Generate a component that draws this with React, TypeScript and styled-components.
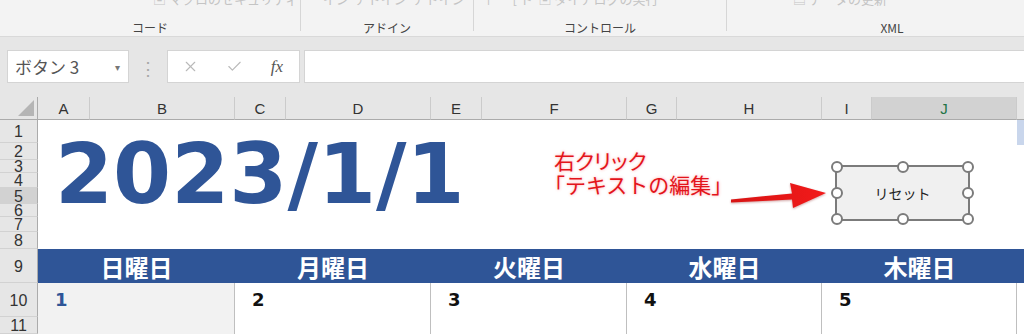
import React from 'react';
import styled, { createGlobalStyle } from 'styled-components';
import { X, Check } from 'lucide-react';

const BLUE = '#2f5597';

const GlobalStyle = createGlobalStyle`
  html, body {
    margin: 0;
    padding: 0;
    background: #e6e6e6;
  }
  body {
    width: 1024px;
    height: 334px;
    overflow: hidden;
    font-family: "Noto Sans CJK JP", "Noto Sans", sans-serif;
  }
`;

const groups = [
  { w: 300, indent: 153, cmd: '▣ マクロのセキュリティ', label: 'コード' },
  { w: 172, indent: 22, cmd: 'イン  アドイン  アドイン', label: 'アドイン' },
  { w: 252, indent: 8, cmd: '↑      [ ト  ▣ ダイアログの実行', label: 'コントロール' },
  { w: 330, indent: 66, cmd: '▤ データの更新', label: 'XML' },
];

const columns = ['A', 'B', 'C', 'D', 'E', 'F', 'G', 'H', 'I', 'J', ''];
const days = ['日曜日', '月曜日', '火曜日', '水曜日', '木曜日', ''];
const handles = [
  [0, 0], [50, 0], [100, 0],
  [0, 50], [100, 50],
  [0, 100], [50, 100], [100, 100],
];

export default function App() {
  return (
    <>
      <GlobalStyle />
      <Ribbon>
        {groups.map((g) => (
          <Group key={g.label} $w={g.w}>
            <Commands $indent={g.indent}>{g.cmd}</Commands>
            <GroupLabel>{g.label}</GroupLabel>
          </Group>
        ))}
      </Ribbon>

      <FormulaBar>
        <NameBox>
          <span>ボタン 3</span>
          <DropArrow>▾</DropArrow>
        </NameBox>
        <Grip>⋮</Grip>
        <FuncBox>
          <X size={17} strokeWidth={1.6} color="#b9b9b9" />
          <Check size={17} strokeWidth={1.6} color="#b9b9b9" />
          <Fx>fx</Fx>
        </FuncBox>
        <FormulaInput />
      </FormulaBar>

      <Sheet>
        <Corner>
          <svg width="16" height="16" viewBox="0 0 16 16">
            <polygon points="16,0 16,16 0,16" fill="#b5b5b5" />
          </svg>
        </Corner>
        {columns.map((c, i) => (
          <ColHeader key={i} $active={c === 'J'}>{c}</ColHeader>
        ))}
        {Array.from({ length: 11 }, (_, i) => (
          <RowHeader key={i} $row={i + 2} $active={i === 4}>{i + 1}</RowHeader>
        ))}

        <TopArea>
          <Title>2023/1/1</Title>
          <Note>
            <NoteLine $tight>右クリック</NoteLine>
            <NoteLine $shift={-10}>「テキストの編集」</NoteLine>
          </Note>
          <Arrow width="100" height="30" viewBox="0 0 100 30">
            <defs>
              <linearGradient id="arrowFill" x1="0" y1="0" x2="1" y2="0">
                <stop offset="0" stopColor="#d81414" />
                <stop offset="1" stopColor="#f21a1a" />
              </linearGradient>
            </defs>
            <polygon
              points="2,18.5 63,12.5 61,2 97,12 64,27 63,18.5 2,21.5"
              fill="url(#arrowFill)"
            />
          </Arrow>
          <FormButton>
            リセット
            {handles.map(([x, y], i) => (
              <Handle key={i} $x={x} $y={y} />
            ))}
          </FormButton>
        </TopArea>
        <EdgeColumn>
          <EdgeMark />
        </EdgeColumn>

        {days.map((d, i) => (
          <DayHead key={i} $col={2 + i * 2}>{d}</DayHead>
        ))}
        {days.map((_, i) => (
          <DateCell key={i} $col={2 + i * 2} $first={i === 0}>
            {i < 5 ? i + 1 : ''}
          </DateCell>
        ))}
      </Sheet>
    </>
  );
}

const Ribbon = styled.div`
  display: flex;
  height: 36px;
  background: #f3f3f3;
  border-bottom: 1px solid #d9d9d9;
  overflow: hidden;
`;

const Group = styled.div<{ $w: number }>`
  flex: 0 0 ${(p) => p.$w}px;
  height: 31px;
  display: flex;
  flex-direction: column;
  justify-content: space-between;
  border-right: 1px solid #d6d6d6;
  &:last-child {
    border-right: none;
  }
`;

const Commands = styled.div<{ $indent: number }>`
  margin-top: -9px;
  padding-left: ${(p) => p.$indent}px;
  font-size: 13px;
  line-height: 16px;
  color: #c4c4c4;
  white-space: pre;
`;

const GroupLabel = styled.div`
  margin-bottom: -4px;
  text-align: center;
  font-size: 12px;
  line-height: 14px;
  color: #444;
`;

const FormulaBar = styled.div`
  display: flex;
  align-items: flex-start;
  height: 60px;
  box-sizing: border-box;
  padding: 13px 0 0 7px;
  background: #e6e6e6;
`;

const NameBox = styled.div`
  width: 122px;
  height: 33px;
  box-sizing: border-box;
  display: flex;
  align-items: center;
  justify-content: space-between;
  padding: 0 8px 0 7px;
  background: #fff;
  border: 1px solid #d4d4d4;
  font-size: 17px;
  color: #555;
`;

const DropArrow = styled.span`
  font-size: 10px;
  color: #777;
`;

const Grip = styled.div`
  width: 38px;
  height: 33px;
  display: flex;
  align-items: center;
  justify-content: center;
  color: #a8a8a8;
  font-size: 18px;
`;

const FuncBox = styled.div`
  width: 133px;
  height: 33px;
  box-sizing: border-box;
  display: flex;
  align-items: center;
  justify-content: space-between;
  padding: 0 16px 0 14px;
  background: #fff;
  border: 1px solid #d4d4d4;
`;

const Fx = styled.span`
  font-family: "Liberation Serif", serif;
  font-style: italic;
  font-size: 17px;
  color: #555;
`;

const FormulaInput = styled.div`
  flex: 1;
  height: 33px;
  margin-left: 4px;
  box-sizing: border-box;
  background: #fff;
  border: 1px solid #d4d4d4;
  border-right: none;
`;

const Sheet = styled.div`
  display: grid;
  grid-template-columns: 38px 52px 145px 51px 145px 51px 145px 50px 145px 50px 145px 1fr;
  grid-template-rows: 23px 23px 17px 13px 15px 16px 13px 15px 17px 34px 34px 17px;
  background: #fff;
  font-family: "Liberation Sans", Arial, sans-serif;
`;

const Corner = styled.div`
  display: flex;
  align-items: flex-end;
  justify-content: flex-end;
  padding: 0 3px 3px 0;
  background: #e6e6e6;
  border-right: 1px solid #ababab;
  border-bottom: 1px solid #ababab;
`;

const ColHeader = styled.div<{ $active?: boolean }>`
  display: flex;
  align-items: center;
  justify-content: center;
  background: ${(p) => (p.$active ? '#d2d2d2' : '#e6e6e6')};
  color: ${(p) => (p.$active ? '#217346' : '#333')};
  border-right: 1px solid #cbcbcb;
  border-bottom: 1px solid #ababab;
  font-size: 15px;
`;

const RowHeader = styled.div<{ $row: number; $active?: boolean }>`
  grid-column: 1;
  grid-row: ${(p) => p.$row};
  display: flex;
  align-items: center;
  justify-content: center;
  overflow: hidden;
  background: ${(p) => (p.$active ? '#d2d2d2' : '#e6e6e6')};
  color: #333;
  border-right: 1px solid #ababab;
  border-bottom: 1px solid #d2d2d2;
  font-size: 16px;
  line-height: 16px;
  padding-top: 2px;
  box-sizing: border-box;
`;

const TopArea = styled.div`
  grid-column: 2 / 12;
  grid-row: 2 / 10;
  position: relative;
  padding: 13px 0 0 17px;
`;

const Title = styled.div`
  font-family: "DejaVu Sans", sans-serif;
  font-weight: 700;
  font-size: 83.5px;
  line-height: 82px;
  color: ${BLUE};
`;

const Note = styled.div`
  position: absolute;
  left: 516px;
  top: 28px;
  font-family: "Noto Sans CJK JP", sans-serif;
  font-size: 21px;
  line-height: 24px;
  color: #e3141b;
  text-shadow: 0 0 3px rgba(255, 60, 60, 0.45);
  white-space: nowrap;
`;

const NoteLine = styled.div<{ $tight?: boolean; $shift?: number }>`
  margin-left: ${(p) => p.$shift ?? 0}px;
  font-feature-settings: ${(p) => (p.$tight ? '"palt"' : 'normal')};
`;

const Arrow = styled.svg`
  position: absolute;
  left: 691px;
  top: 61px;
  filter: drop-shadow(0 1px 1px rgba(120, 0, 0, 0.35));
`;

const FormButton = styled.div`
  position: absolute;
  left: 797px;
  top: 45px;
  width: 135px;
  height: 56px;
  box-sizing: border-box;
  display: flex;
  align-items: center;
  justify-content: center;
  background: #f0f0f0;
  border: 2px solid #7b7b7b;
  font-family: "Noto Sans CJK JP", sans-serif;
  font-size: 14px;
  color: #222;
`;

const Handle = styled.span<{ $x: number; $y: number }>`
  position: absolute;
  left: calc(${(p) => p.$x}% - 6px);
  top: calc(${(p) => p.$y}% - 6px);
  width: 8px;
  height: 8px;
  border-radius: 50%;
  background: #fff;
  border: 2px solid #7b7b7b;
`;

const EdgeColumn = styled.div`
  grid-column: 12;
  grid-row: 2 / 10;
`;

const EdgeMark = styled.div`
  height: 25px;
  background: #c9d6ec;
`;

const DayHead = styled.div<{ $col: number }>`
  grid-column: ${(p) => p.$col} / span 2;
  grid-row: 10;
  display: flex;
  align-items: center;
  justify-content: center;
  background: ${BLUE};
  color: #fff;
  font-family: "Noto Sans CJK JP", sans-serif;
  font-weight: 700;
  font-size: 24px;
`;

const DateCell = styled.div<{ $col: number; $first?: boolean }>`
  grid-column: ${(p) => p.$col} / span 2;
  grid-row: 11 / 13;
  padding: 5px 0 0 17px;
  background: ${(p) => (p.$first ? '#f2f2f2' : '#fff')};
  border-right: 1px solid #bfbfbf;
  color: ${(p) => (p.$first ? BLUE : '#111')};
  font-family: "DejaVu Sans", sans-serif;
  font-weight: 700;
  font-size: 18px;
  line-height: 24px;
`;
